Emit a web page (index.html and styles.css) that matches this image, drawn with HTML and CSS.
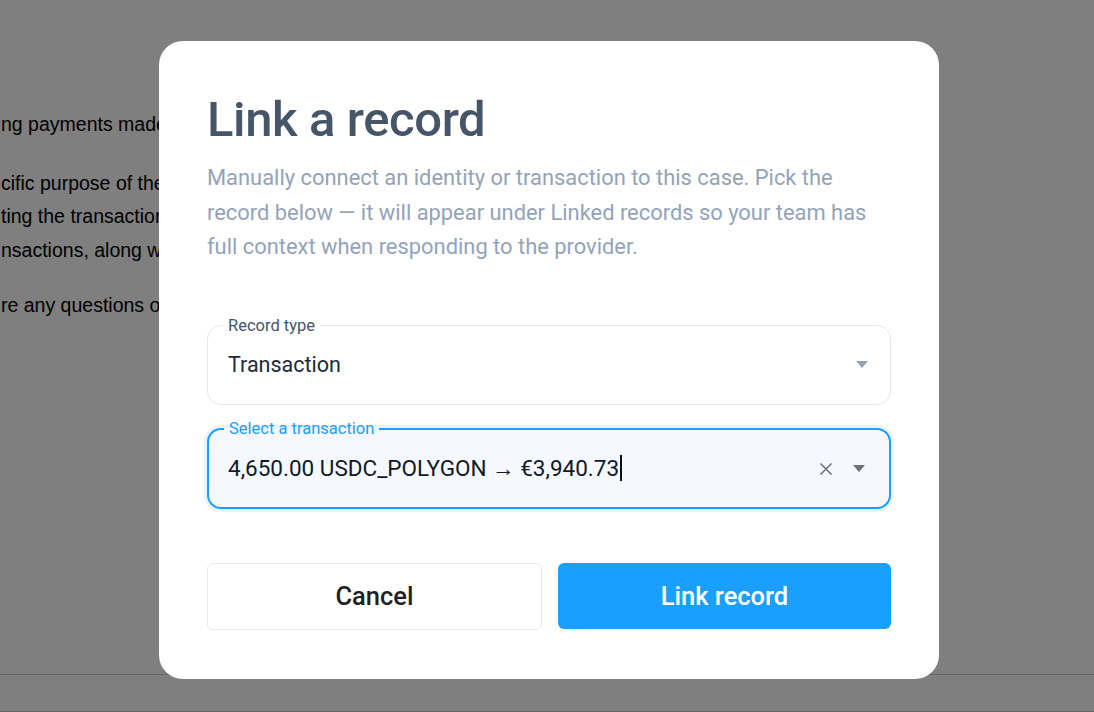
FILE: index.html
```html
<!DOCTYPE html>
<html>
<head>
<meta charset="utf-8" />
<title>Link a record</title>
<link rel="stylesheet" href="styles.css">
</head>
<body>
<div class="page">
    <p class="line">ng payments made</p>
    <p class="line gap-a">cific purpose of the</p>
    <p class="line">ting the transaction</p>
    <p class="line">nsactions, along wi</p>
    <p class="line gap-b">re any questions or</p>
    <div class="footer"></div>
</div>

<div class="overlay">
    <div class="modal">
        <h1 class="title">Link a record</h1>
        <p class="desc">Manually connect an identity or transaction to this case. Pick the record below — it will appear under Linked records so your team has full context when responding to the provider.</p>

        <fieldset class="field">
            <legend>Record type</legend>
            <div class="field-row">
                <span class="value">Transaction</span>
                <svg class="caret-down light" width="12" height="7" viewBox="0 0 12 7"><path d="M0 0h12L6 7z"/></svg>
            </div>
        </fieldset>

        <fieldset class="field focused">
            <legend>Select a transaction</legend>
            <div class="field-row">
                <span class="value">4,650.00 USDC_POLYGON → €3,940.73<i class="cursor"></i></span>
                <svg class="clear" width="14" height="14" viewBox="0 0 14 14"><path d="M1.5 1.5l11 11M12.5 1.5l-11 11"/></svg>
                <svg class="caret-down" width="12" height="7" viewBox="0 0 12 7"><path d="M0 0h12L6 7z"/></svg>
            </div>
        </fieldset>

        <div class="actions">
            <button class="btn btn-cancel">Cancel</button>
            <button class="btn btn-primary">Link record</button>
        </div>
    </div>
</div>
</body>
</html>
```

FILE: styles.css
```css
*{ padding:0; margin:0; box-sizing:border-box; }
body{
    width: 100%;
    height: 100%;
    background: #fff;
    font-family: "Liberation Sans", Arial, sans-serif;
    color: #000;
    overflow: hidden;
}
.page{
    height: 712px;
    padding-top: 108px;
}
.line{
    font-size: 19.5px;
    line-height: 33.5px;
    white-space: nowrap;
    padding-left: 1px;
}
.line.gap-a{ margin-top: 25px; }
.line.gap-b{ margin-top: 22px; }
.footer{
    margin-top: 351px;
    border-top: 1px solid #cfcfcf;
    height: 38px;
    border-bottom: 1px solid #cfcfcf;
}

.overlay{
    position: fixed;
    inset: 0;
    background: rgba(0,0,0,.5);
    display: flex;
    justify-content: center;
    padding-top: 41px;
    padding-left: 4px;
}
.modal{
    width: 780px;
    height: 638px;
    background: #fff;
    border-radius: 24px;
    padding: 50px 48px 0;
    font-family: Roboto, "Noto Sans", sans-serif;
}
.title{
    font-size: 49px;
    font-weight: 500;
    color: #475569;
    line-height: 58px;
    letter-spacing: -0.4px;
}
.desc{
    margin-top: 12px;
    font-size: 21.9px;
    line-height: 34.5px;
    color: #94a3b8;
}

.field{
    border: 1px solid #e2e8f0;
    border-radius: 14px;
    padding: 0 20px;
    height: 89px;
    margin-top: 51px;
}
.field legend{
    font-size: 16.5px;
    color: #475569;
    padding: 0 5px;
    margin-left: -5px;
    line-height: 20px;
}
.field-row{
    display: flex;
    align-items: center;
    height: 64px;
    margin-top: -3px;
}
.value{
    flex: 1;
    font-size: 21.5px;
    color: #1e293b;
}
.caret-down{ fill: #6b7280; margin-right: 2px; }
.caret-down.light{ fill: #94a3b8; }
.clear{
    stroke: #6b7280;
    stroke-width: 1.6;
    margin-right: 20px;
}
.cursor{
    display: inline-block;
    width: 2px;
    height: 26px;
    background: #111;
    vertical-align: -5px;
    margin-left: 1px;
}

.field.focused{
    margin-top: 14px;
    border: 2px solid #1a9fff;
    background: #f5f9ff;
    box-shadow: 0 0 0 3px #e8f3ff;
    padding: 0 22px 0 19px;
    height: 90px;
}
.field.focused legend{
    color: #1a9fff;
    margin-left: -4px;
}
.field.focused .value{
    color: #111827;
    font-size: 22.5px;
}
.field.focused .field-row{ margin-top: -2px; }

.actions{
    display: flex;
    gap: 16px;
    margin-top: 54px;
}
.btn{
    flex: 1;
    height: 67px;
    border-radius: 6px;
    font-family: Roboto, "Noto Sans", sans-serif;
    font-size: 25.5px;
    cursor: pointer;
}
.btn-cancel{
    background: #fff;
    border: 1px solid #e8eaf2;
    color: #1f1f1f;
    font-weight: 500;
}
.btn-primary{
    background: #1a9fff;
    border: 0;
    color: #fff;
    font-weight: 500;
    height: 66px;
}
```
